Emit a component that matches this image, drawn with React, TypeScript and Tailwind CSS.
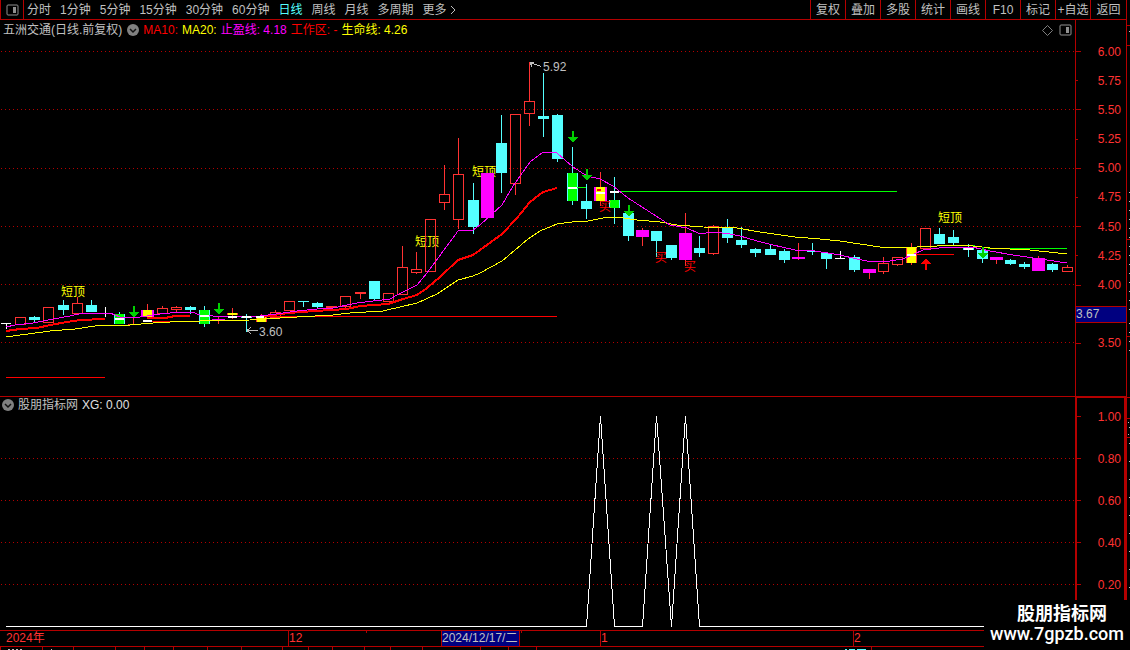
import React from 'react';
import clsx from 'clsx';

type Kind = 'red' | 'cyan' | 'white' | 'green' | 'magenta' | 'yellow' | 'amber';
// kind, high, body top, body bottom, low
type Candle = [Kind, number, number, number, number];

const periods = ['分时', '1分钟', '5分钟', '15分钟', '30分钟', '60分钟', '日线', '周线', '月线', '多周期', '更多'];
const tools = ['复权', '叠加', '多股', '统计', '画线', 'F10', '标记', '+自选', '返回'];
const prices = ['6.00', '5.75', '5.50', '5.25', '5.00', '4.75', '4.50', '4.25', '4.00', '3.67', '3.50'];
const levels = ['1.00', '0.80', '0.60', '0.40', '0.20'];

const candles: Candle[] = [
  ['white', 323, 323, 324, 329], ['red', 317, 317, 325, 325], ['cyan', 316, 317, 320, 322], ['red', 307, 307, 323, 323],
  ['cyan', 300, 305, 310, 315], ['red', 297, 303, 314, 314], ['cyan', 300, 305, 312, 312], ['white', 307, 313, 314, 317],
  ['green', 312, 314, 324, 324], ['red', 318, 324, 325, 325], ['yellow', 304, 310, 317, 317], ['red', 306, 308, 314, 314],
  ['red', 306, 307, 310, 312], ['cyan', 306, 307, 310, 314], ['green', 306, 310, 324, 327], ['magenta', 317, 319, 321, 324],
  ['amber', 308, 313, 315, 319], ['cyan', 314, 316, 318, 332], ['amber', 314, 317, 322, 322], ['red', 310, 312, 318, 318],
  ['red', 301, 301, 311, 311], ['cyan', 301, 301, 302, 307], ['cyan', 302, 303, 307, 308], ['red', 306, 306, 308, 308],
  ['red', 296, 296, 307, 308], ['red', 292, 292, 294, 299], ['cyan', 281, 281, 299, 300], ['red', 293, 293, 302, 302],
  ['red', 246, 267, 295, 295], ['red', 252, 269, 273, 274], ['red', 219, 219, 272, 272], ['red', 165, 194, 203, 210],
  ['red', 138, 174, 220, 229], ['cyan', 183, 200, 227, 234], ['magenta', 173, 173, 218, 218], ['cyan', 115, 143, 173, 193],
  ['red', 114, 114, 184, 195], ['red', 62, 101, 114, 126], ['cyan', 73, 116, 119, 137], ['cyan', 114, 115, 159, 162],
  ['green', 147, 173, 201, 205], ['cyan', 184, 201, 209, 219], ['yellow', 172, 187, 201, 206], ['green', 177, 200, 208, 224],
  ['cyan', 213, 213, 236, 241], ['magenta', 228, 230, 237, 246], ['cyan', 231, 231, 241, 257], ['cyan', 245, 245, 258, 260],
  ['magenta', 213, 233, 260, 266], ['cyan', 236, 248, 253, 257], ['red', 225, 226, 254, 255], ['cyan', 219, 228, 238, 243],
  ['cyan', 227, 240, 245, 248], ['cyan', 248, 249, 253, 257], ['cyan', 245, 249, 255, 255], ['cyan', 249, 251, 260, 263],
  ['magenta', 243, 257, 259, 260], ['cyan', 243, 251, 252, 255], ['cyan', 252, 253, 259, 269], ['white', 251, 258, 259, 259],
  ['cyan', 255, 257, 270, 272], ['magenta', 269, 269, 273, 279], ['red', 257, 263, 272, 274], ['red', 257, 257, 265, 266],
  ['amber', 243, 247, 263, 265], ['red', 228, 228, 249, 249], ['cyan', 228, 234, 244, 244], ['cyan', 230, 237, 243, 245],
  ['cyan', 244, 248, 250, 257], ['cyan', 250, 250, 259, 263], ['magenta', 257, 257, 260, 264], ['cyan', 259, 260, 264, 265],
  ['cyan', 262, 264, 267, 269], ['magenta', 256, 258, 271, 271], ['cyan', 263, 264, 270, 272], ['red', 265, 267, 272, 272],
];

const wickColor: Record<Kind, string> = {
  red: '#ff3232', cyan: '#54ffff', white: '#ffffff', green: '#54ffff',
  magenta: '#ff3232', yellow: '#ff3232', amber: '#ff3232',
};

const stopLine =
  '6,327 15,325 33,323 53,319 70,316 83,313 110,313 120,317 133,318 147,316 160,314 180,312 192,312 200,315 213,316 260,316 276,314 290,312 297,311 317,309 333,308 357,303 390,299 397,295 417,285 427,273 458,231 473,230 480,225 502,205 513,186 530,162 543,152 557,153 573,167 587,176 600,179 613,186 628,198 670,225 687,228 700,234 713,232 730,234 740,236 757,241 773,245 795,250 815,251 840,255 857,259 867,261 890,261 903,259 912,255 923,250 947,247 972,247 990,251 1013,255 1040,259 1067,263';
const lifeLine =
  '6,336 13,336 50,331 75,329 102,325 130,325 153,323 187,321 200,321 250,320 280,318 297,317 333,315 350,313 383,311 417,303 437,294 458,280 473,276 480,273 502,261 515,250 528,239 540,231 557,224 572,222 588,221 603,218 617,217 637,220 660,222 677,225 703,227 737,228 760,232 795,237 820,239 840,241 880,247 917,247 958,245 973,246 990,248 1030,250 1067,254';
const workLines = [
  '6,331 20,329 37,328 50,325 67,322 80,320 105,319',
  '147,318 165,318 175,316 190,316',
  '262,317 280,314 300,312 347,309 360,306 388,304 403,299 417,295 427,288 440,277 458,260 473,255 480,250 502,234 517,218 530,202 543,192 557,188',
];

const Grid = ({ rows }: { rows: number[] }) => (
  <g stroke="#b40000" strokeDasharray="1 3">
    {rows.map((y) => (
      <line key={y} x1="1" x2="1075" y1={y + 0.5} y2={y + 0.5} />
    ))}
  </g>
);

const CandleShape = ({ data, index }: { data: Candle; index: number }) => {
  const [kind, high, top, bottom, low] = data;
  const x = Math.round(6 + index * 14.14);
  const h = Math.max(bottom - top, 1);
  return (
    <g>
      {kind === 'red' ? (
        <>
          <rect x={x} y={high} width="1" height={top - high} fill="#ff3232" />
          <rect x={x} y={bottom} width="1" height={Math.max(low - bottom, 0)} fill="#ff3232" />
          {h < 3 ? (
            <rect x={x - 5} y={top} width="11" height={h} fill="#ff3232" />
          ) : (
            <rect x={x - 4.5} y={top + 0.5} width="10" height={h - 1} fill="none" stroke="#ff3232" />
          )}
        </>
      ) : (
        <rect x={x} y={high} width="1" height={low - high} fill={wickColor[kind]} />
      )}
      {kind === 'cyan' && <rect x={x - 5} y={top} width="11" height={h} fill="#54ffff" />}
      {kind === 'white' && <rect x={x - 5} y={top} width="10" height={h} fill="#ffffff" />}
      {kind === 'magenta' && <rect x={x - 6} y={top} width="13" height={h} fill="#ff00ff" />}
      {kind === 'green' && (
        <>
          <rect x={x - 5} y={top} width="11" height={h} fill="#54ffff" />
          <rect x={x - 4} y={top} width="9" height={h} fill="#00ff00" />
        </>
      )}
      {kind === 'yellow' && (
        <>
          <rect x={x - 6} y={top} width="13" height={h} fill="#ff00ff" />
          <rect x={x - 4} y={top} width="9" height={h} fill="#ffff00" />
        </>
      )}
      {kind === 'amber' && (
        <>
          <rect x={x - 5} y={top} width="11" height={h} fill="#ff3232" />
          <rect x={x - 4} y={top} width="9" height={h} fill="#ffff00" />
        </>
      )}
    </g>
  );
};

const DownArrow = ({ x, y }: { x: number; y: number }) => (
  <path d={`M${x - 1} ${y}h2v6h4l-5 6l-5-6h4z`} fill="#00d000" />
);

const PriceChart = () => (
  <svg viewBox="0 40 1075 356" className="block h-auto w-full" shapeRendering="crispEdges" fontSize="12">
    <Grid rows={[51, 109, 168, 226, 284, 342]} />
    <g fill="#ffff00">
      <text x="61" y="296">短顶</text>
      <text x="415" y="246">短顶</text>
      <text x="472" y="176">短顶</text>
      <text x="938" y="222">短顶</text>
    </g>
    {candles.map((c, i) => (
      <CandleShape key={i} data={c} index={i} />
    ))}
    <g stroke="#00ff00">
      <path d="M572 187.5h14M610 191.5h287M963 245.5h12M988 248.5h79" />
    </g>
    <path d="M6 377.5h99M145 321.5h45M260 316.5h297M911 254.5h43" stroke="#ff0000" />
    <g fill="none">
      {workLines.map((points) => (
        <polyline key={points} points={points} stroke="#ff0000" strokeWidth="2" />
      ))}
      <polyline points={lifeLine} stroke="#ffff00" />
      <polyline points={stopLine} stroke="#ff00ff" />
    </g>
    {/* signal bars */}
    <path
      d="M115 319h9M143 321h9M200 316h9M228 317h9M242 317h9M256 317h8M568 188h9M596 193h9M610 192h9M907 255h9M964 249h9"
      stroke="#ffffff"
      strokeWidth="2"
    />
    <path d="M597 190h4" stroke="#ff0000" strokeWidth="2" />
    <DownArrow x={134} y={306} />
    <DownArrow x={219} y={303} />
    <DownArrow x={573} y={131} />
    <DownArrow x={587} y={169} />
    <DownArrow x={629} y={205} />
    <DownArrow x={983} y={247} />
    <path d="M926 258l5 6h-4v6h-2v-6h-4z" fill="#ff0000" />
    <g fill="#ff0000">
      <text x="599" y="211">买</text>
      <text x="655" y="262">买</text>
      <text x="684" y="271">买</text>
    </g>
    <g fill="#c0c0c0">
      <text x="543" y="71">5.92</text>
      <text x="259" y="336">3.60</text>
    </g>
    <path d="M530 62.5l11 4M530 62.5h4M530 62.5l2 4M247 330.5h11M247 330.5l4-3M247 330.5l4 3" stroke="#c0c0c0" fill="none" />
  </svg>
);

const SignalChart = () => (
  <svg viewBox="0 414 1075 216" className="block h-auto w-full" shapeRendering="crispEdges">
    <Grid rows={[458, 500, 542, 584]} />
    <polyline
      points="6,626.5 586.5,626.5 600.5,416 614.5,626.5 642.5,626.5 656.5,416 671.5,626.5 685.5,416 699.5,626.5 1067,626.5"
      fill="none"
      stroke="#ffffff"
    />
  </svg>
);

const CollapseButton = ({ label }: { label: string }) => (
  <button type="button" aria-label={label} className="block size-3 shrink-0">
    <svg viewBox="0 0 12 12" className="size-3">
      <circle cx="6" cy="6" r="6" fill="#808080" />
      <path d="M3 5l3 3l3-3" fill="none" stroke="#111111" strokeWidth="1.5" />
    </svg>
  </button>
);

const PanelIcon = () => (
  <svg viewBox="0 0 13 12" className="h-3 w-[13px] shrink-0">
    <rect x="1" y="1" width="11" height="10" rx="1" fill="none" stroke="#909090" />
    <rect x="7" y="3" width="3" height="6" fill="#909090" />
  </svg>
);

const TopBar = () => (
  <header className="flex h-5 items-stretch justify-between border-b border-[#b40000] text-[#c0c0c0]">
    <nav className="flex items-center gap-[9px]">
      <button
        type="button"
        aria-label="侧栏"
        className="-mr-1.5 flex h-full w-6 items-center justify-center border-x border-[#b40000]"
      >
        <PanelIcon />
      </button>
      {periods.map((p) => (
        <button key={p} type="button" className={clsx('whitespace-nowrap', p === '日线' && 'text-[#54ffff]')}>
          {p}
        </button>
      ))}
      <svg viewBox="0 0 6 10" className="-ml-1.5 h-2.5 w-1.5">
        <path d="M1 1l4 4l-4 4" fill="none" stroke="#c0c0c0" />
      </svg>
    </nav>
    <div className="flex">
      {tools.map((t) => (
        <button
          key={t}
          type="button"
          className="w-[35px] whitespace-nowrap border-l border-[#b40000] text-center last:w-9"
        >
          {t}
        </button>
      ))}
    </div>
  </header>
);

const App = () => {
  return (
    <div className="relative flex min-h-screen overflow-hidden bg-black font-['Liberation_Sans','Noto_Sans_CJK_SC',sans-serif] text-[12px] leading-4">
      <div className="min-w-0 flex-1">
        <TopBar />

        {/* Price panel */}
        <section className="flex">
          <div className="min-w-0 flex-1">
            <div className="flex h-5 items-center gap-1 whitespace-nowrap px-[3px]">
              <h1 className="mr-px text-[#c0c0c0]">五洲交通(日线.前复权)</h1>
              <CollapseButton label="收起主图" />
              <span className="text-[#ff0000]">MA10:</span>
              <span className="text-[#ffff00]">MA20:</span>
              <span className="text-[#ff00ff]">止盈线: 4.18</span>
              <span className="text-[#ff0000]">工作区: -</span>
              <span className="text-[#ffff00]">生命线: 4.26</span>
              <svg viewBox="0 0 11 11" className="ml-auto mr-0.5 size-[11px]">
                <path d="M5.5 .5l5 5l-5 5l-5-5z" fill="none" stroke="#808080" />
              </svg>
              <PanelIcon />
            </div>
            <PriceChart />
          </div>
          <ul className="flex w-[51px] flex-col justify-between border-l border-[#b40000] pb-11 pt-[23px]">
            {prices.map((p, i) =>
              p === '3.67' ? (
                <li key={p} className="h-[17px] border-y border-[#b40000] bg-[#000080] leading-[15px] text-[#c0c0c0]">
                  {p}
                </li>
              ) : (
                <li key={p} className="flex h-[17px] items-center justify-between pr-[5px] text-[#ff3232]">
                  <span className={clsx('h-px bg-[#b40000]', i % 2 ? 'w-0.5' : 'w-[5px]')} />
                  {p}
                </li>
              ),
            )}
          </ul>
        </section>

        {/* Indicator panel */}
        <section className="flex border-t border-[#b40000]">
          <div className="min-w-0 flex-1">
            <div className="flex h-[17px] items-center gap-1 whitespace-nowrap pb-px pl-0.5 text-[#c0c0c0]">
              <CollapseButton label="收起副图" />
              <h2>股朋指标网</h2>
              <span className="text-[#e0e0e0]">XG: 0.00</span>
            </div>
            <SignalChart />
          </div>
          <ul className="flex w-[51px] flex-col justify-between border-x-2 border-t border-[#b40000] pb-[37px] pt-[10px]">
            {levels.map((v) => (
              <li key={v} className="flex h-[17px] items-center justify-between pr-[3px] text-[#ff3232]">
                <span className="h-px w-1 bg-[#b40000]" />
                {v}
              </li>
            ))}
          </ul>
        </section>

        {/* Date axis */}
        <footer className="border-t border-[#b40000]">
          <div className="grid h-[15px] grid-cols-[288fr_153fr_159fr_253fr_273fr] leading-[15px] text-[#ff3232]">
            <span className="pl-1.5">2024年</span>
            <span className="flex justify-between border-l border-[#b40000]">
              12
              <i className="mr-[74px] h-0.5 w-px bg-[#b40000]" />
            </span>
            <span className="flex gap-px">
              <span className="whitespace-nowrap border-x border-[#b40000] bg-[#000080] pr-0.5 text-[#c0c0c0]">
                2024/12/17/二
              </span>
              <i className="h-0.5 w-px bg-[#b40000]" />
            </span>
            <span className="border-l border-[#b40000]">1</span>
            <span className="border-l border-[#b40000]">2</span>
          </div>
          <svg viewBox="0 646 1126 4" className="block h-auto w-full" shapeRendering="crispEdges">
            <path
              d="M0 646.5h1126M.5 646v4M42.5 646v4M73.5 646v4M115.5 646v4M144.5 646v4M173.5 646v4M207.5 646v4M241.5 646v4M282.5 646v4M308.5 646v4M332.5 646v4M364.5 646v4M390.5 646v4M422.5 646v4M480.5 646v4M508.5 646v4M536.5 646v4M871.5 646v4"
              stroke="#b40000"
            />
            <path d="M8 649.5h2M12 649.5h2M16 649.5h2M20 649.5h2M51 649.5h1" stroke="#c0c0c0" />
            <path d="M845 649.5h2M849 649.5h6M857 649.5h9" stroke="#54ffff" />
          </svg>
        </footer>
      </div>

      {/* Edge of the quote sidebar */}
      <aside className="w-1 border-l border-[#b40000]">
        <svg viewBox="0 0 3 650" className="block w-[3px]" shapeRendering="crispEdges">
          <path d="M0 25.5h3M0 45.5h3M0 239.5h3M0 336.5h3M0 397.5h3M0 418.5h3M0 437.5h3" stroke="#b40000" />
          <path
            d="M2.5 31v7M1 422.5h2M2 427.5h1M1 434.5h2M2.5 192v120M2.5 323v30"
            stroke="#c0c0c0"
            strokeDasharray="1 8"
          />
          <path d="M2.5 443v150" stroke="#c0c0c0" strokeDasharray="1 17" />
        </svg>
      </aside>

      <a
        href="#"
        className="absolute bottom-0 right-0 flex h-[50px] w-[146px] flex-col items-center bg-black pt-1 text-white"
      >
        <strong className="pl-2.5 text-[18px] leading-5">股朋指标网</strong>
        <span className="font-['Roboto',sans-serif] text-[18px] leading-5 font-medium">www.7gpzb.com</span>
      </a>
    </div>
  );
};

export default App;
